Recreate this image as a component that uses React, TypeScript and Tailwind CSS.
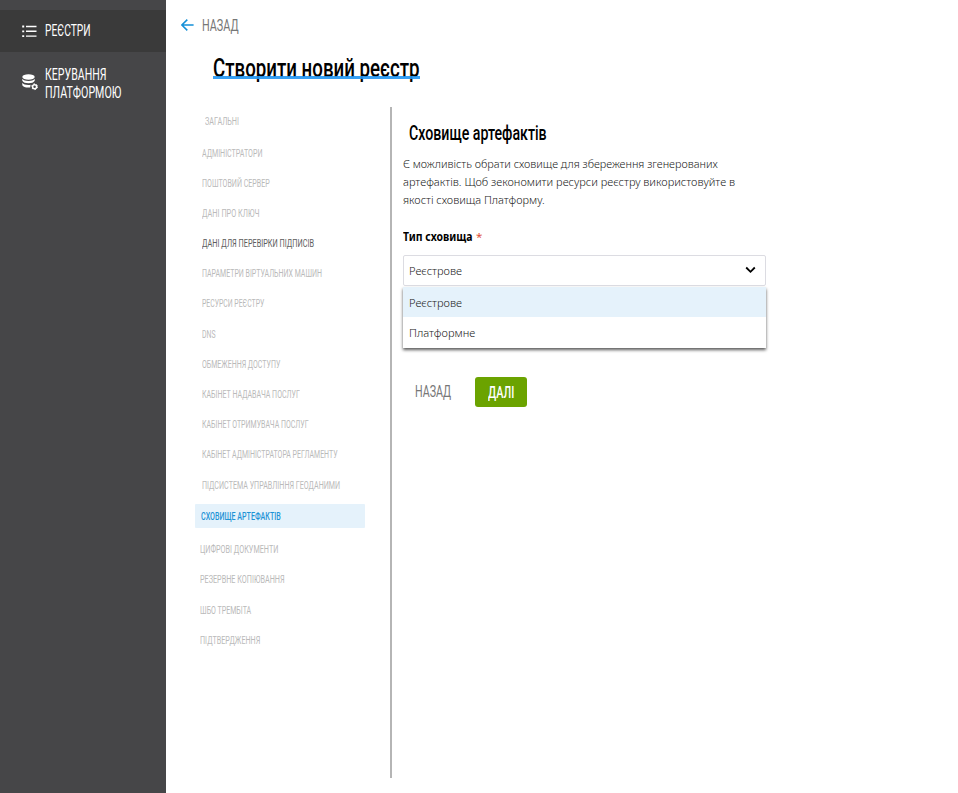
import { useLayoutEffect, useRef, useState } from "react";

// Single line of text squeezed or stretched horizontally to a given width.
function Fit({ text, w, className = "" }: { text: string; w: number; className?: string }) {
  const ref = useRef<HTMLSpanElement>(null);
  const [scale, setScale] = useState(1);
  useLayoutEffect(() => {
    if (ref.current) setScale(w / ref.current.offsetWidth);
  }, [w, text]);
  return (
    <span className={`block whitespace-nowrap ${className}`} style={{ width: w }}>
      <span ref={ref} className="inline-block origin-left" style={{ transform: `scaleX(${scale})` }}>
        {text}
      </span>
    </span>
  );
}

const upper: [string, number][] = [
  ["АДМІНІСТРАТОРИ", 60.5],
  ["ПОШТОВИЙ СЕРВЕР", 67.5],
  ["ДАНІ ПРО КЛЮЧ", 57.3],
  ["ДАНІ ДЛЯ ПЕРЕВІРКИ ПІДПИСІВ", 112.3],
  ["ПАРАМЕТРИ ВІРТУАЛЬНИХ МАШИН", 120.3],
  ["РЕСУРСИ РЕЄСТРУ", 62.3],
  ["DNS", 13.8],
  ["ОБМЕЖЕННЯ ДОСТУПУ", 78.3],
  ["КАБІНЕТ НАДАВАЧА ПОСЛУГ", 98],
  ["КАБІНЕТ ОТРИМУВАЧА ПОСЛУГ", 106.3],
  ["КАБІНЕТ АДМІНІСТРАТОРА РЕГЛАМЕНТУ", 135.8],
  ["ПІДСИСТЕМА УПРАВЛІННЯ ГЕОДАНИМИ", 138],
];

const lower: [string, number][] = [
  ["ЦИФРОВІ ДОКУМЕНТИ", 78.3],
  ["РЕЗЕРВНЕ КОПІЮВАННЯ", 84.3],
  ["ШБО ТРЕМБІТА", 51.3],
  ["ПІДТВЕРДЖЕННЯ", 60],
];

function ListIcon() {
  return (
    <svg width="15" height="13" viewBox="0 0 15 13" fill="none" stroke="#fff" strokeWidth="1.4">
      <path d="M4 1.5h10.500M4 6.300h10.500M4 11.100h10.500" />
      <path d="M.2 1.500h2M.2 6.300h2M.2 11.100h2" strokeWidth="1.800" />
    </svg>
  );
}

function DatabaseIcon() {
  return (
    <svg width="16" height="17" viewBox="0 0 16 17" fill="#fff">
      <ellipse cx="6.5" cy="3" rx="6.2" ry="2.7" />
      <path d="M.3 4.7c1 1.6 3.4 2.2 6.2 2.2s5.200-.6 6.200-2.200v2c-.8 1.700-3.200 2.500-6.200 2.500S1.100 8.400.3 6.700z" />
      <path d="M.3 8.800c1 1.500 3.200 2.200 6 2.200 1 0 1.700-.1 2.300-.2l-.4 2.600c-.6.1-1.200.2-1.900.2-3 0-5.200-.8-6-2.400z" />
      <circle cx="12.600" cy="12.700" r="2" fill="none" stroke="#fff" strokeWidth="1.500" />
      <circle cx="12.600" cy="12.700" r="2.900" fill="none" stroke="#fff" strokeWidth="1" strokeDasharray="1.500 1.540" />
    </svg>
  );
}

export default function App() {
  return (
    <div className="flex h-[793px] w-[958px] overflow-hidden bg-white font-['Roboto',sans-serif]">
      <aside className="w-[165.5px] shrink-0 bg-[#464648] pt-[10px] text-base text-white">
        <div className="flex h-[42px] items-center gap-[7.500px] bg-[#3a3a3a] pl-[22px]">
          <ListIcon />
          <Fit text="РЕЄСТРИ" w={45.5} className="leading-[44px]" />
        </div>
        <div className="mt-[14px] flex gap-[6.500px] pl-[22px]">
          <div className="pt-[8px]">
            <DatabaseIcon />
          </div>
          <div className="leading-[18px]">
            <Fit text="КЕРУВАННЯ" w={61.5} />
            <Fit text="ПЛАТФОРМОЮ" w={76.5} />
          </div>
        </div>
      </aside>

      <main className="flex min-w-0 flex-1 flex-col">
        <div className="flex h-[52px] items-center gap-[8px] pl-[15.500px] text-[#777]">
          <svg width="13" height="12" viewBox="0 0 13 12" fill="none" stroke="#1590d8" strokeWidth="1.500" className="-mt-0.5">
            <path d="M12.600 6H1.200M6.300.6.9 6l5.400 5.400" />
          </svg>
          <Fit text="НАЗАД" w={36.5} className="leading-[52px]" />
        </div>

        <div className="h-[54px] pl-[47.500px]">
          <div className="relative w-[207px] text-[26px] font-medium leading-[32px] text-black">
            <Fit text="Створити новий реєстр" w={206.500} />
            <div className="absolute top-[24px] left-0 h-[3px] w-[207px] bg-[#2196f3]/90" />
          </div>
        </div>

        <div className="flex">
          <nav className="w-[224.500px] pl-[29.500px] text-[11px] text-[#bababa]">
            <Fit text="ЗАГАЛЬНІ" w={34.3} className="ml-[9.500px] h-[31.500px] leading-[31px]" />
            {upper.map(([t, w], i) => (
              <Fit
                key={t}
                text={t}
                w={w}
                className={`ml-[6.500px] h-[30.200px] leading-[32px] ${i === 3 ? "text-[#5c5c5c]" : ""}`}
              />
            ))}
            <div className="mt-[4px] mb-[6.500px] h-[24px] w-[170px] rounded-[1px] bg-[#e5f2fb] pl-[6px] font-medium text-[#1e93d6]">
              <Fit text="СХОВИЩЕ АРТЕФАКТІВ" w={79.5} className="leading-[26px]" />
            </div>
            {lower.map(([t, w]) => (
              <Fit key={t} text={t} w={w} className="ml-[4.500px] h-[30.200px] leading-[32px]" />
            ))}
          </nav>

          <div className="mt-px h-[671px] w-[2px] bg-[#b5b5b5]" />

          <section className="w-[375px] pl-[11px] font-['Noto_Sans',sans-serif] text-[11.500px] text-[#222]">
            <h2 className="mt-[14px] pl-[6px] font-['Roboto',sans-serif] text-[20px] font-medium leading-[26px] text-black">
              <Fit text="Сховище артефактів" w={137.500} />
            </h2>
            <div className="mt-[9px] font-light leading-[18px]">
              <Fit text="Є можливість обрати сховище для збереження згенерованих" w={314.500} />
              <Fit text="артефактів. Щоб зекономити ресурси реєстру використовуйте в" w={332} />
              <Fit text="якості сховища Платформу." w={141.500} />
            </div>
            <div className="mt-[19px] flex gap-[3px] leading-[18px]">
              <Fit text="Тип сховища" w={70} className="font-bold text-black" />
              <span className="text-[#e0503a]">*</span>
            </div>

            <div className="mt-[9px] flex h-[31px] w-[362.500px] items-center justify-between rounded-[2px] border border-[#dcdce2] pr-[9px] pl-[5px]">
              <Fit text="Реєстрове" w={53} className="pt-px font-light" />
              <svg width="11" height="8" viewBox="0 0 11 8" fill="none" stroke="#000" strokeWidth="1.800" className="-mt-px">
                <path d="M1.200 1.500 5.500 5.800 9.800 1.500" />
              </svg>
            </div>
            <div className="mt-px w-[362.500px] font-light shadow-[0_2px_3px_rgba(0,0,0,0.65)]">
              <div className="h-[30px] bg-[#e5f2fb] pl-[6px] leading-[31px]">
                <Fit text="Реєстрове" w={53} />
              </div>
              <div className="h-[30.500px] bg-white pl-[6px] leading-[31px]">
                <Fit text="Платформне" w={66.500} />
              </div>
            </div>

            <div className="mt-[28.500px] flex items-center font-['Roboto',sans-serif] text-base">
              <button className="ml-[12px] text-[#777]">
                <Fit text="НАЗАД" w={36} className="leading-[32px]" />
              </button>
              <button className="ml-[24px] flex h-[30.500px] w-[52px] justify-center rounded-[3px] bg-[#6ba300] text-white">
                <Fit text="ДАЛІ" w={26.500} className="font-medium leading-[32px]" />
              </button>
            </div>
          </section>
        </div>
      </main>
    </div>
  );
}
